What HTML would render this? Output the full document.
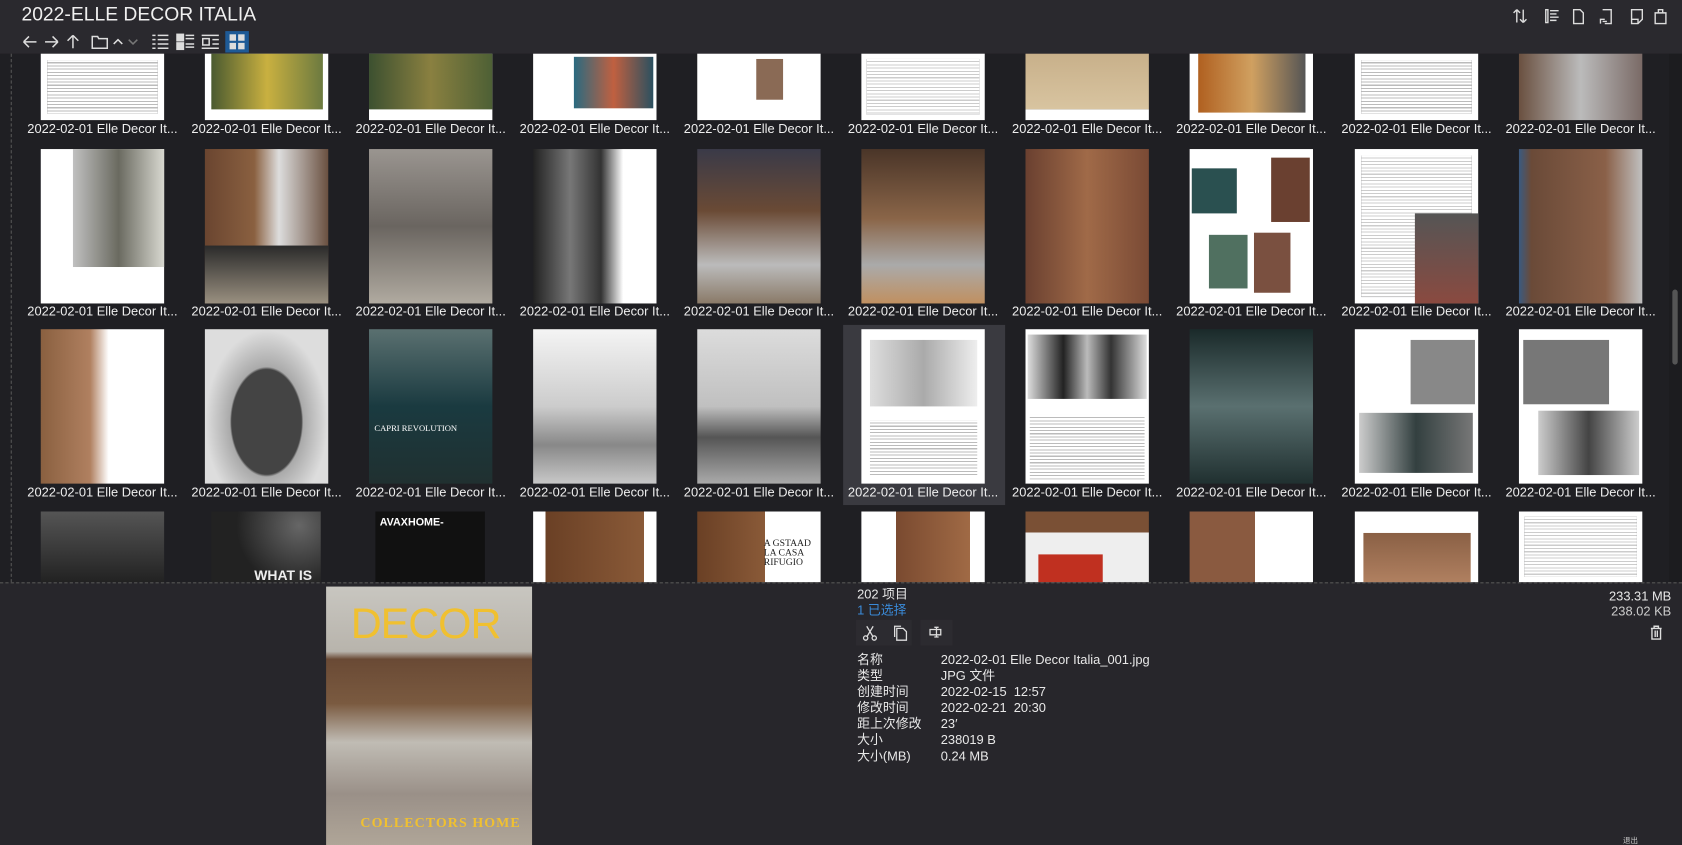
<!DOCTYPE html>
<html><head><meta charset="utf-8"><style>
*{margin:0;padding:0;box-sizing:border-box}
html,body{width:1682px;height:845px;overflow:hidden;background:#1f1f23}
#s{width:1568px;height:788px;transform:scale(1.07270,1.07234);transform-origin:0 0;position:relative;font-family:"Liberation Sans","Noto Sans CJK SC",sans-serif;color:#e8e8e8;background:#1f1f23;overflow:hidden}
.top{position:absolute;left:0;top:0;width:1568px;height:50px;background:#2a292e;z-index:3}
.top h1{position:absolute;left:20px;top:3px;font-weight:normal;font-size:18px;color:#f0f0f0}
.tb{position:absolute;top:30px;font-size:14px;color:#ddd}
.grid{position:absolute;left:0;top:0;width:1556px;height:543px}
.c{position:absolute;width:115px}
.i{position:absolute;left:0;width:115px}
.l{position:absolute;left:-15px;width:145px;text-align:center;font-size:12px;color:#eee;white-space:nowrap}
.sel{position:absolute;left:786px;top:303px;width:151px;height:168px;background:#3a3a40}
.sb{position:absolute;left:1556px;top:50px;width:12px;height:493px;background:#1c1c1f}
.bot{position:absolute;left:0;top:543px;width:1568px;height:245px;background:#27262b;border-top:1px dashed #555}
.p{position:absolute;font-size:12px;line-height:15px}
.lg{position:absolute;left:10px;top:0;width:1px;height:788px;border-left:1px dashed #555}
</style></head><body><div id="s">
<div class="lg"></div>
<div class="grid">
<div class="sel"></div>
<!-- row1 -->
<div class="c" style="left:38px;top:50px"><div class="i" style="top:0;height:62px;background:repeating-linear-gradient(#fff 0 2px,#bbb 2px 3px);border:6px solid #fff"></div><div class="l" style="top:63px">2022-02-01 Elle Decor It...</div></div>
<div class="c" style="left:191px;top:50px"><div class="i" style="top:0;height:62px;background:#fff"></div><div class="i" style="top:0;height:52px;left:6px;width:104px;background:linear-gradient(90deg,#4a5a30,#c9b040 50%,#6c7a40)"></div><div class="l" style="top:63px">2022-02-01 Elle Decor It...</div></div>
<div class="c" style="left:344px;top:50px"><div class="i" style="top:0;height:62px;background:#fff"></div><div class="i" style="top:0;height:52px;background:linear-gradient(90deg,#3c5030,#8a8040,#4d6035)"></div><div class="l" style="top:63px">2022-02-01 Elle Decor It...</div></div>
<div class="c" style="left:497px;top:50px"><div class="i" style="top:0;height:62px;background:#fff"></div><div class="i" style="top:3px;left:38px;width:74px;height:48px;background:linear-gradient(90deg,#2a6a80,#c06040,#2a5060)"></div><div class="l" style="top:63px">2022-02-01 Elle Decor It...</div></div>
<div class="c" style="left:650px;top:50px"><div class="i" style="top:0;height:62px;background:#fff"></div><div class="i" style="top:5px;left:55px;width:25px;height:38px;background:#8a6a55"></div><div class="l" style="top:63px">2022-02-01 Elle Decor It...</div></div>
<div class="c" style="left:803px;top:50px"><div class="i" style="top:0;height:62px;background:repeating-linear-gradient(#fff 0 2px,#ccc 2px 3px);border:5px solid #fff"></div><div class="l" style="top:63px">2022-02-01 Elle Decor It...</div></div>
<div class="c" style="left:956px;top:50px"><div class="i" style="top:0;height:62px;background:linear-gradient(#c8b08a,#d8c4a0);border-bottom:10px solid #fff"></div><div class="l" style="top:63px">2022-02-01 Elle Decor It...</div></div>
<div class="c" style="left:1109px;top:50px"><div class="i" style="top:0;height:62px;background:#fff"></div><div class="i" style="top:0;left:8px;width:100px;height:55px;background:linear-gradient(90deg,#b06020,#d0a060,#555)"></div><div class="l" style="top:63px">2022-02-01 Elle Decor It...</div></div>
<div class="c" style="left:1263px;top:50px"><div class="i" style="top:0;height:62px;background:repeating-linear-gradient(#fff 0 2px,#bbb 2px 3px);border:6px solid #fff"></div><div class="l" style="top:63px">2022-02-01 Elle Decor It...</div></div>
<div class="c" style="left:1416px;top:50px"><div class="i" style="top:0;height:62px;background:linear-gradient(90deg,#6a5040,#bbb,#7a6a66)"></div><div class="l" style="top:63px">2022-02-01 Elle Decor It...</div></div>
<!-- row2 -->
<div class="c" style="left:38px;top:139px"><div class="i" style="top:0;height:144px;background:#fff"></div><div class="i" style="top:0;left:30px;width:85px;height:110px;background:linear-gradient(90deg,#c0c0c0,#6a6a60,#d8d8d0)"></div><div class="l" style="top:144px">2022-02-01 Elle Decor It...</div></div>
<div class="c" style="left:191px;top:139px"><div class="i" style="top:0;height:144px;background:linear-gradient(90deg,#6a4530,#8a6040 40%,#ddd 60%,#6a5040);"></div><div class="i" style="top:90px;height:54px;background:linear-gradient(#2a2a2a,#9a9080)"></div><div class="l" style="top:144px">2022-02-01 Elle Decor It...</div></div>
<div class="c" style="left:344px;top:139px"><div class="i" style="top:0;height:144px;background:linear-gradient(#9a9590,#6a6560 50%,#b0aaa0)"></div><div class="l" style="top:144px">2022-02-01 Elle Decor It...</div></div>
<div class="c" style="left:497px;top:139px"><div class="i" style="top:0;height:144px;background:linear-gradient(90deg,#222 0,#777 30%,#333 55%,#fff 73%,#fff)"></div><div class="l" style="top:144px">2022-02-01 Elle Decor It...</div></div>
<div class="c" style="left:650px;top:139px"><div class="i" style="top:0;height:144px;background:linear-gradient(#3a3a48,#6a4a35 40%,#bbb 75%,#8a7a68)"></div><div class="l" style="top:144px">2022-02-01 Elle Decor It...</div></div>
<div class="c" style="left:803px;top:139px"><div class="i" style="top:0;height:144px;background:linear-gradient(#4a3528,#8a6548 45%,#aaa 75%,#c09060)"></div><div class="l" style="top:144px">2022-02-01 Elle Decor It...</div></div>
<div class="c" style="left:956px;top:139px"><div class="i" style="top:0;height:144px;background:linear-gradient(90deg,#6a4030,#a06a48 50%,#7a4a35)"></div><div class="l" style="top:144px">2022-02-01 Elle Decor It...</div></div>
<div class="c" style="left:1109px;top:139px"><div class="i" style="top:0;height:144px;background:#fff"></div><div class="i" style="top:18px;left:2px;width:42px;height:42px;background:#2a5050"></div><div class="i" style="top:8px;left:76px;width:36px;height:60px;background:#6a4030"></div><div class="i" style="top:80px;left:18px;width:36px;height:50px;background:#507060"></div><div class="i" style="top:78px;left:60px;width:34px;height:56px;background:#7a5040"></div><div class="l" style="top:144px">2022-02-01 Elle Decor It...</div></div>
<div class="c" style="left:1263px;top:139px"><div class="i" style="top:0;height:144px;background:repeating-linear-gradient(#fff 0 2px,#ccc 2px 3px);border:6px solid #fff"></div><div class="i" style="top:60px;left:56px;width:59px;height:84px;background:linear-gradient(#555,#8a4a40)"></div><div class="l" style="top:144px">2022-02-01 Elle Decor It...</div></div>
<div class="c" style="left:1416px;top:139px"><div class="i" style="top:0;height:144px;background:linear-gradient(90deg,#3a5a80 0,#6a4a38 10%,#8a6048 70%,#c0c0c0)"></div><div class="l" style="top:144px">2022-02-01 Elle Decor It...</div></div>
<!-- row3 -->
<div class="c" style="left:38px;top:307px"><div class="i" style="top:0;height:144px;background:linear-gradient(90deg,#8a6040,#b08060 40%,#fff 55%,#fff)"></div><div class="l" style="top:145px">2022-02-01 Elle Decor It...</div></div>
<div class="c" style="left:191px;top:307px"><div class="i" style="top:0;height:144px;background:radial-gradient(ellipse at 50% 60%,#444 0 40%,#aaa 42%,#ddd 70%)"></div><div class="l" style="top:145px">2022-02-01 Elle Decor It...</div></div>
<div class="c" style="left:344px;top:307px"><div class="i" style="top:0;height:144px;background:linear-gradient(#5a7070,#1a3a40 50%,#203030)"></div><div class="i" style="top:88px;left:5px;width:105px;font:8px 'Liberation Serif',serif;color:#fff">CAPRI REVOLUTION</div><div class="l" style="top:145px">2022-02-01 Elle Decor It...</div></div>
<div class="c" style="left:497px;top:307px"><div class="i" style="top:0;height:144px;background:linear-gradient(#f4f4f4,#ccc 50%,#888 75%,#c8c8c8)"></div><div class="l" style="top:145px">2022-02-01 Elle Decor It...</div></div>
<div class="c" style="left:650px;top:307px"><div class="i" style="top:0;height:144px;background:linear-gradient(#dcdcdc,#c0c0c0 50%,#555 70%,#aaa)"></div><div class="l" style="top:145px">2022-02-01 Elle Decor It...</div></div>
<div class="c" style="left:803px;top:307px"><div class="i" style="top:0;height:144px;background:#fff"></div><div class="i" style="top:10px;left:8px;width:100px;height:62px;background:linear-gradient(90deg,#ddd,#aaa,#eee)"></div><div class="i" style="top:85px;left:8px;width:100px;height:52px;background:repeating-linear-gradient(#fff 0 2px,#bbb 2px 3px)"></div><div class="l" style="top:145px">2022-02-01 Elle Decor It...</div></div>
<div class="c" style="left:956px;top:307px"><div class="i" style="top:0;height:144px;background:#fff"></div><div class="i" style="top:5px;left:2px;width:111px;height:60px;background:linear-gradient(90deg,#ddd,#222 30%,#bbb 50%,#333 70%,#ddd)"></div><div class="i" style="top:80px;left:4px;width:107px;height:60px;background:repeating-linear-gradient(#fff 0 2px,#bbb 2px 3px)"></div><div class="l" style="top:145px">2022-02-01 Elle Decor It...</div></div>
<div class="c" style="left:1109px;top:307px"><div class="i" style="top:0;height:144px;background:linear-gradient(#1a2a2a,#5a7070 50%,#203030)"></div><div class="l" style="top:145px">2022-02-01 Elle Decor It...</div></div>
<div class="c" style="left:1263px;top:307px"><div class="i" style="top:0;height:144px;background:#fff"></div><div class="i" style="top:10px;left:52px;width:60px;height:60px;background:#888"></div><div class="i" style="top:78px;left:4px;width:106px;height:56px;background:linear-gradient(90deg,#ccc,#334040 50%,#777)"></div><div class="l" style="top:145px">2022-02-01 Elle Decor It...</div></div>
<div class="c" style="left:1416px;top:307px"><div class="i" style="top:0;height:144px;background:#fff"></div><div class="i" style="top:10px;left:4px;width:80px;height:60px;background:#777"></div><div class="i" style="top:76px;left:18px;width:94px;height:60px;background:linear-gradient(90deg,#ccc,#444,#ccc)"></div><div class="l" style="top:145px">2022-02-01 Elle Decor It...</div></div>
<!-- row4 -->
<div class="c" style="left:38px;top:477px"><div class="i" style="top:0;height:66px;background:linear-gradient(#555,#222)"></div></div>
<div class="c" style="left:191px;top:477px"><div class="i" style="top:0;left:6px;width:102px;height:66px;background:radial-gradient(circle at 80% 20%,#666,#222 60%)"></div><div class="i" style="top:52px;left:46px;width:70px;font:bold 13px 'Liberation Sans',sans-serif;color:#eee">WHAT IS</div></div>
<div class="c" style="left:344px;top:477px"><div class="i" style="top:0;left:6px;width:102px;height:66px;background:#111"></div><div class="i" style="top:5px;left:10px;font:bold 10px 'Liberation Sans',sans-serif;color:#fff">AVAXHOME-</div></div>
<div class="c" style="left:497px;top:477px"><div class="i" style="top:0;height:66px;background:linear-gradient(90deg,#fff 0 10%,#6a4025 10%,#8a5a38 90%,#fff 90%)"></div></div>
<div class="c" style="left:650px;top:477px"><div class="i" style="top:0;height:66px;background:linear-gradient(90deg,#6a4025,#8a5a38 55%,#fff 55%)"></div><div class="i" style="top:25px;left:62px;width:50px;font:9px/9px 'Liberation Serif',serif;color:#222">A GSTAAD<br>LA CASA<br>RIFUGIO</div></div>
<div class="c" style="left:803px;top:477px"><div class="i" style="top:0;height:66px;background:linear-gradient(90deg,#fff 0 28%,#7a4a30 28%,#a06a45 88%,#fff 88%)"></div></div>
<div class="c" style="left:956px;top:477px"><div class="i" style="top:0;height:66px;background:linear-gradient(#7a5035 0 30%,#eee 30%)"></div><div class="i" style="top:40px;left:12px;width:60px;height:26px;background:#c03020"></div></div>
<div class="c" style="left:1109px;top:477px"><div class="i" style="top:0;height:66px;background:linear-gradient(90deg,#8a5a40 0 53%,#fff 53%)"></div></div>
<div class="c" style="left:1263px;top:477px"><div class="i" style="top:0;height:66px;background:#fff"></div><div class="i" style="top:20px;left:8px;width:100px;height:46px;background:linear-gradient(#8a6045,#b08060)"></div></div>
<div class="c" style="left:1416px;top:477px"><div class="i" style="top:0;height:66px;background:repeating-linear-gradient(#fff 0 2px,#ccc 2px 3px);border:5px solid #fff"></div></div>
</div>
<div class="sb"><div style="position:absolute;left:3px;top:220px;width:5px;height:70px;background:#555;border-radius:3px"></div></div>
<div class="top"><h1>2022-ELLE DECOR ITALIA</h1>
<svg style="position:absolute;left:18px;top:30px" width="220" height="18" fill="none" stroke="#ddd" stroke-width="1.4">
<path d="M4 9h12M4 9l5-5M4 9l5 5"/><path d="M24 9h12M36 9l-5-5M36 9l-5 5"/><path d="M50 15V3M50 3l-5 5M50 3l5 5"/>
<path d="M68 4h5l1 2h8v9H68z"/><path d="M88 11l4-4 4 4"/><path d="M102 7l4 4 4-4" stroke="#777"/>
<path d="M124 3h3M124 7h3M124 11h3M124 15h3M129 3h10M129 7h10M129 11h10M129 15h10"/>
<rect x="147" y="2" width="6" height="6" fill="#ddd"/><rect x="147" y="10" width="6" height="6" fill="#ddd"/><path d="M155 3h8M155 6h8M155 11h8M155 14h8"/>
<path d="M170 3h16M170 15h16M171 6v6h6V6z M180 7h6M180 11h6"/>
</svg>
<div style="position:absolute;left:210px;top:29px;width:22px;height:20px;background:#1e5a96"><div style="position:absolute;left:4px;top:3px;width:6px;height:6px;background:#ddd"></div><div style="position:absolute;left:12px;top:3px;width:6px;height:6px;background:#ddd"></div><div style="position:absolute;left:4px;top:11px;width:6px;height:6px;background:#ddd"></div><div style="position:absolute;left:12px;top:11px;width:6px;height:6px;background:#ddd"></div></div>
<svg style="position:absolute;left:1408px;top:6px" width="160" height="18" fill="none" stroke="#ddd" stroke-width="1.3">
<path d="M6 15V3M6 3l-3 3M6 3l3 3M12 3v12M12 15l-3-3M12 15l3-3"/>
<path d="M33 3h2v12h-2zM37 4h8M37 7h6M37 10h8M37 13h6"/>
<path d="M59 3h6l3 3v10h-9z"/><path d="M86 3h8v13h-6M88 12h-4v4M86 14h4"/>
<path d="M113 3h10v9l-4 4h-6zM113 12h6v4"/><path d="M135 6h10v10h-10zM138 6V3h4v3"/>
</svg>
</div>
<div class="bot">
<div style="position:absolute;left:304px;top:3px;width:192px;height:242px;background:linear-gradient(#c8c6c0 0,#b8b4ac 25%,#6a4a35 28%,#7a5a40 45%,#c0bcb4 60%,#9a9088 80%,#b0a698)"></div>
<div style="position:absolute;left:305px;top:18px;width:190px;font:40px/40px 'Liberation Sans',sans-serif;color:#f0c030;padding-left:22px;letter-spacing:-1px">DECOR</div>
<div style="position:absolute;left:336px;top:215px;font:bold 13px 'Liberation Serif',serif;color:#f0c030;letter-spacing:1px">COLLECTORS HOME</div>
<div class="p" style="left:799px;top:3px">202 项目</div>
<div class="p" style="left:799px;top:18px;color:#3a8ad8">1 已选择</div>
<div style="position:absolute;left:798px;top:34px;width:52px;height:24px;background:#2c2b30"></div>
<div style="position:absolute;left:858px;top:34px;width:30px;height:24px;background:#2c2b30"></div>
<svg style="position:absolute;left:803px;top:38px" width="80" height="16" fill="none" stroke="#ddd" stroke-width="1.2"><path d="M5 2l6 10M11 2L5 12"/><circle cx="4" cy="13" r="2"/><circle cx="12" cy="13" r="2"/><path d="M33 4h6l3 3v8h-9zM31 12V2h6"/><path d="M64 5h10v5H64zM70 3v9M68 3h4M68 12h4"/></svg>
<div class="p" style="left:799px;top:64px;line-height:15px">名称<br>类型<br>创建时间<br>修改时间<br>距上次修改<br>大小<br>大小(MB)</div>
<div class="p" style="left:877px;top:64px;line-height:15px;white-space:pre">2022-02-01 Elle Decor Italia_001.jpg
JPG 文件
2022-02-15  12:57
2022-02-21  20:30
23′
238019 B
0.24 MB</div>
<div class="p" style="right:10px;top:5px;text-align:right">233.31 MB</div>
<div class="p" style="right:10px;top:19px;text-align:right;color:#ccc">238.02 KB</div>
<svg style="position:absolute;left:1537px;top:38px" width="14" height="16" fill="none" stroke="#ddd" stroke-width="1.3"><path d="M2 4h10M5 4V2h4v2M3 4v10h8V4M6 6v6M8 6v6"/></svg>
<div style="position:absolute;left:1513px;top:235px;font-size:7px;color:#ccc">退出</div>
</div>
</div></body></html>
